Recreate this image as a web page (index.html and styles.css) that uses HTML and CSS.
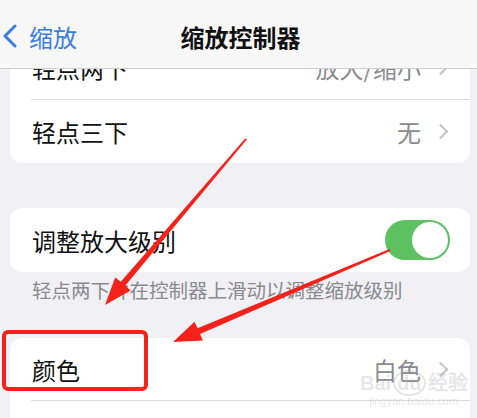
FILE: index.html
```html
<!DOCTYPE html>
<html lang="zh-CN">
<head>
    <meta charset="UTF-8">
    <meta name="viewport" content="width=device-width, initial-scale=1.0">
    <title>缩放控制器</title>
    <link rel="stylesheet" href="styles.css">
</head>
<body>
    <div class="nav-bar">
        <div class="nav-back">
            <svg class="back-icon" width="16" height="24" viewBox="0 0 16 24">
                <path d="M13 2 L3 12 L13 22" fill="none" stroke="#3a7de0" stroke-width="3" stroke-linecap="round" stroke-linejoin="round"/>
            </svg>
            <span>缩放</span>
        </div>
        <div class="nav-title">缩放控制器</div>
    </div>

    <div class="content">
        <div class="card">
            <div class="row">
                <span class="label">轻点两下</span>
                <span class="value">放大/缩小<span class="chevron"></span></span>
            </div>
            <div class="row">
                <span class="label">轻点三下</span>
                <span class="value">无<span class="chevron"></span></span>
            </div>
        </div>

        <div class="card card-toggle">
            <div class="row row-tall">
                <span class="label">调整放大级别</span>
                <span class="switch on"><span class="knob"></span></span>
            </div>
        </div>
        <div class="footnote">轻点两下并在控制器上滑动以调整缩放级别</div>

        <div class="card card-color">
            <div class="row row-short">
                <span class="label">颜色</span>
                <span class="value">白色<span class="chevron"></span></span>
            </div>
            <div class="row row-cut"></div>
        </div>
    </div>

    <div class="watermark">
        <div class="wm-logo">Bai<span class="wm-du">du</span>经验</div>
        <div class="wm-url">jingyan.baidu.com</div>
    </div>

    <svg class="marks" width="477" height="418" viewBox="0 0 477 418">
        <polygon fill="#f5221b" points="246.8,139.6 125.4,285.6 130.5,290.5 105,305 115.2,277.4 120.8,281.8 245.2,138.4"/>
        <polygon fill="#f5221b" points="390.4,250.9 200,333.9 203,340.5 173,342 194.5,321.8 197.6,328.3 389.6,249.1"/>
        <rect x="4" y="332" width="142" height="57" rx="4" fill="none" stroke="#f5221b" stroke-width="4"/>
    </svg>
</body>
</html>
```

FILE: styles.css
```css
body {
    margin: 0;
    padding: 0;
    background-color: #f0f0f5;
    font-family: "Noto Sans CJK SC", "Noto Sans", sans-serif;
    color: #111;
    width: 477px;
    height: 418px;
    overflow: hidden;
}
.nav-bar {
    position: fixed;
    top: 0;
    left: 0;
    right: 0;
    height: 68px;
    background-color: #f7f7f7;
    border-bottom: 1px solid #cfcfd2;
    display: flex;
    align-items: center;
    justify-content: center;
    z-index: 2;
}
.nav-back {
    position: absolute;
    left: 2px;
    top: 0;
    height: 68px;
    display: flex;
    align-items: center;
    gap: 11px;
    color: #3a7de0;
    font-size: 24px;
    padding-top: 4px;
    box-sizing: border-box;
}
.nav-title {
    font-size: 24px;
    font-weight: 600;
    padding-top: 4px;
    margin-left: 4px;
}
.content {
    padding: 36px 7px 0 10px;
}
.card {
    background-color: #fff;
    border-radius: 12px;
    overflow: hidden;
}
.card-toggle {
    margin-top: 45px;
}
.card-color {
    margin-top: 36px;
    border-radius: 12px 12px 0 0;
}
.row {
    height: 63px;
    margin-left: 21px;
    padding-right: 22px;
    display: flex;
    align-items: center;
    justify-content: space-between;
    font-size: 24px;
}
.row + .row {
    border-top: 1px solid #dcdce0;
}
.row-tall {
    height: 64px;
    padding-right: 20px;
}
.row-short {
    height: 62px;
}
.row-cut {
    height: 17px;
}
.label {
    padding-left: 1px;
}
.value {
    color: #8a8a8e;
    display: flex;
    align-items: center;
}
.chevron {
    width: 9px;
    height: 9px;
    border-top: 2px solid #c4c4c7;
    border-right: 2px solid #c4c4c7;
    transform: rotate(45deg);
    margin-left: 14px;
    margin-right: 2px;
}
.switch {
    width: 65px;
    height: 40px;
    border-radius: 20px;
    background-color: #5cc160;
    display: flex;
    align-items: center;
    justify-content: flex-end;
    padding: 2px;
    box-sizing: border-box;
}
.knob {
    width: 36px;
    height: 36px;
    border-radius: 50%;
    background-color: #fff;
}
.footnote {
    margin-top: 6px;
    padding-left: 22px;
    font-size: 19.5px;
    line-height: 24px;
    color: #8a8a8e;
}
.watermark {
    position: absolute;
    left: 360px;
    top: 372px;
    color: rgba(170, 170, 170, 0.3);
    font-family: "Liberation Sans", sans-serif;
    text-align: center;
}
.wm-logo {
    font-size: 20px;
    font-weight: bold;
    line-height: 22px;
}
.wm-du {
    border: 2px solid rgba(170, 170, 170, 0.3);
    border-radius: 50%;
    padding: 0 2px;
    margin: 0 2px;
}
.wm-url {
    font-size: 11px;
    line-height: 14px;
}
.marks {
    position: absolute;
    left: 0;
    top: 0;
    z-index: 3;
}
```
